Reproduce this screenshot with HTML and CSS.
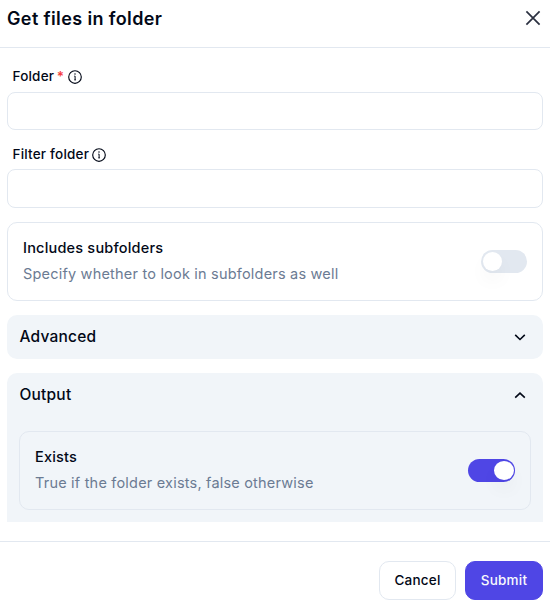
FILE: index.html
```html
<!DOCTYPE html>
<html lang="en">
<head>
<meta charset="utf-8">
<title>Get files in folder</title>
<link rel="stylesheet" href="styles.css">
</head>
<body>
<div class="dialog">
  <header class="header">
    <h1 class="title">Get files in folder</h1>
    <svg class="close" viewBox="0 0 16 16" aria-label="Close"><path d="M1.4 1.4 14.6 14.6M14.6 1.4 1.4 14.6"/></svg>
  </header>
  <main class="body">
    <div class="field">
      <label class="label first" for="folder"><span>Folder</span><span class="required">*</span>
        <svg class="info" viewBox="0 0 14 14"><circle cx="7" cy="7" r="6.3"/><path class="stem" d="M6.3 6.1h.8v3.8M6.3 9.9h1.6"/><circle class="dot" cx="7" cy="4.1" r=".75"/></svg>
      </label>
      <input class="input" id="folder">
    </div>
    <div class="field second">
      <label class="label" for="filter"><span>Filter folder</span>
        <svg class="info" viewBox="0 0 14 14"><circle cx="7" cy="7" r="6.3"/><path class="stem" d="M6.3 6.1h.8v3.8M6.3 9.9h1.6"/><circle class="dot" cx="7" cy="4.1" r=".75"/></svg>
      </label>
      <input class="input tall" id="filter">
    </div>
    <section class="card">
      <div class="copy">
        <div class="name">Includes subfolders</div>
        <div class="desc">Specify whether to look in subfolders as well</div>
      </div>
      <span class="switch"><span class="thumb"></span></span>
    </section>
    <section class="panel">
      <div class="panel-head"><span class="panel-title">Advanced</span>
        <svg class="chevron" viewBox="0 0 12 8"><path d="m1.2 1.9 4.8 4.6 4.8-4.6"/></svg>
      </div>
    </section>
    <section class="panel open">
      <div class="panel-head"><span class="panel-title">Output</span>
        <svg class="chevron" viewBox="0 0 12 8"><path d="m1.2 6.7 4.8-4.6 4.8 4.6"/></svg>
      </div>
      <div class="card nested">
        <div class="copy">
          <div class="name">Exists</div>
          <div class="desc">True if the folder exists, false otherwise</div>
        </div>
        <span class="switch on"><span class="thumb"></span></span>
      </div>
    </section>
  </main>
  <footer class="footer">
    <button class="button cancel">Cancel</button>
    <button class="button submit">Submit</button>
  </footer>
</div>
</body>
</html>
```
FILE: styles.css
```css
* { box-sizing: border-box; }
body {
  margin: 0;
  background: #fff;
  color: #020817;
  font-family: Inter, "Liberation Sans", sans-serif;
}
.dialog { height: 602px; display: flex; flex-direction: column; overflow: hidden; }
.header {
  height: 48px;
  flex: none;
  display: flex;
  justify-content: space-between;
  align-items: flex-start;
  padding: 7px 9px 0 7px;
  border-bottom: 1px solid #e2e8f0;
}
.title { margin: 0; font-size: 18px; line-height: 24px; font-weight: 600; letter-spacing: .38px; }
.close { width: 16px; height: 16px; margin-top: 3px; fill: none; stroke: #2b3040; stroke-width: 1.7; }
.body { height: 474px; flex: none; padding: 20px 7px 0; overflow: hidden; }
.label {
  display: flex;
  align-items: center;
  height: 18px;
  margin: 0 0 6px 5.5px;
  font-size: 13.5px;
  font-weight: 500;
  letter-spacing: .2px;
}
.first { height: 16px; margin-bottom: 8px; }
.required { color: #f53b3b; margin-left: 2.5px; font-weight: 600; }
.info { width: 14px; height: 14px; margin: 1px 0 0 3.4px; fill: none; stroke: #020817; stroke-width: 1.15; }
.first .info { margin-top: 2px; }
.stem { stroke-width: 1; }
.dot { fill: #020817; stroke: none; }
.input {
  display: block;
  width: 100%;
  height: 38px;
  margin: 0;
  border: 1px solid #e2e8f0;
  border-radius: 8px;
  background: #fff;
  outline: none;
}
.second { margin-top: 15px; }
.tall { height: 39px; }
.card {
  height: 79px;
  margin-top: 14px;
  padding: 0 15px;
  display: flex;
  align-items: center;
  justify-content: space-between;
  border: 1px solid #e2e8f0;
  border-radius: 10px;
}
.copy { padding-bottom: 2px; }
.name { font-size: 14.5px; line-height: 26px; font-weight: 500; letter-spacing: .2px; }
.desc { font-size: 14.5px; line-height: 26px; color: #6b7b93; letter-spacing: .2px; }
.switch {
  width: 46px;
  height: 23px;
  padding: 2px;
  display: flex;
  border-radius: 12px;
  background: #e2e8f0;
}
.thumb {
  width: 19px;
  height: 19px;
  border-radius: 50%;
  background: #fff;
  box-shadow: 0 10px 18px rgba(0, 0, 0, .04);
}
.on { width: 47px; justify-content: flex-end; background: #4f46e5; padding-right: 1px; }
.on .thumb { width: 20px; }
.panel { margin-top: 14px; border-radius: 10px; background: #f1f5f9; }
.panel-head {
  height: 44px;
  padding: 0 17px 0 12.5px;
  display: flex;
  align-items: center;
  justify-content: space-between;
  font-size: 15.5px;
  font-weight: 500;
  letter-spacing: .2px;
}
.panel-title { padding-bottom: 1px; }
.chevron { width: 12px; height: 8px; fill: none; stroke: #020817; stroke-width: 1.6; }
.open { height: 160px; }
.nested { margin: 14px 12px 0; }
.footer {
  flex: 1;
  margin-top: 19px;
  padding: 19px 7px 0;
  display: flex;
  justify-content: flex-end;
  gap: 9px;
  border-top: 1px solid #e2e8f0;
}
.button {
  height: 39px;
  padding: 0 0 1px;
  border: 1px solid #e2e8f0;
  border-radius: 10px;
  background: #fff;
  color: #020817;
  font: 500 13.5px/20px Inter, "Liberation Sans", sans-serif;
  letter-spacing: .2px;
}
.cancel { width: 77px; }
.submit { width: 78px; border-color: #4f46e5; background: #4f46e5; color: #f8fafc; }
```
